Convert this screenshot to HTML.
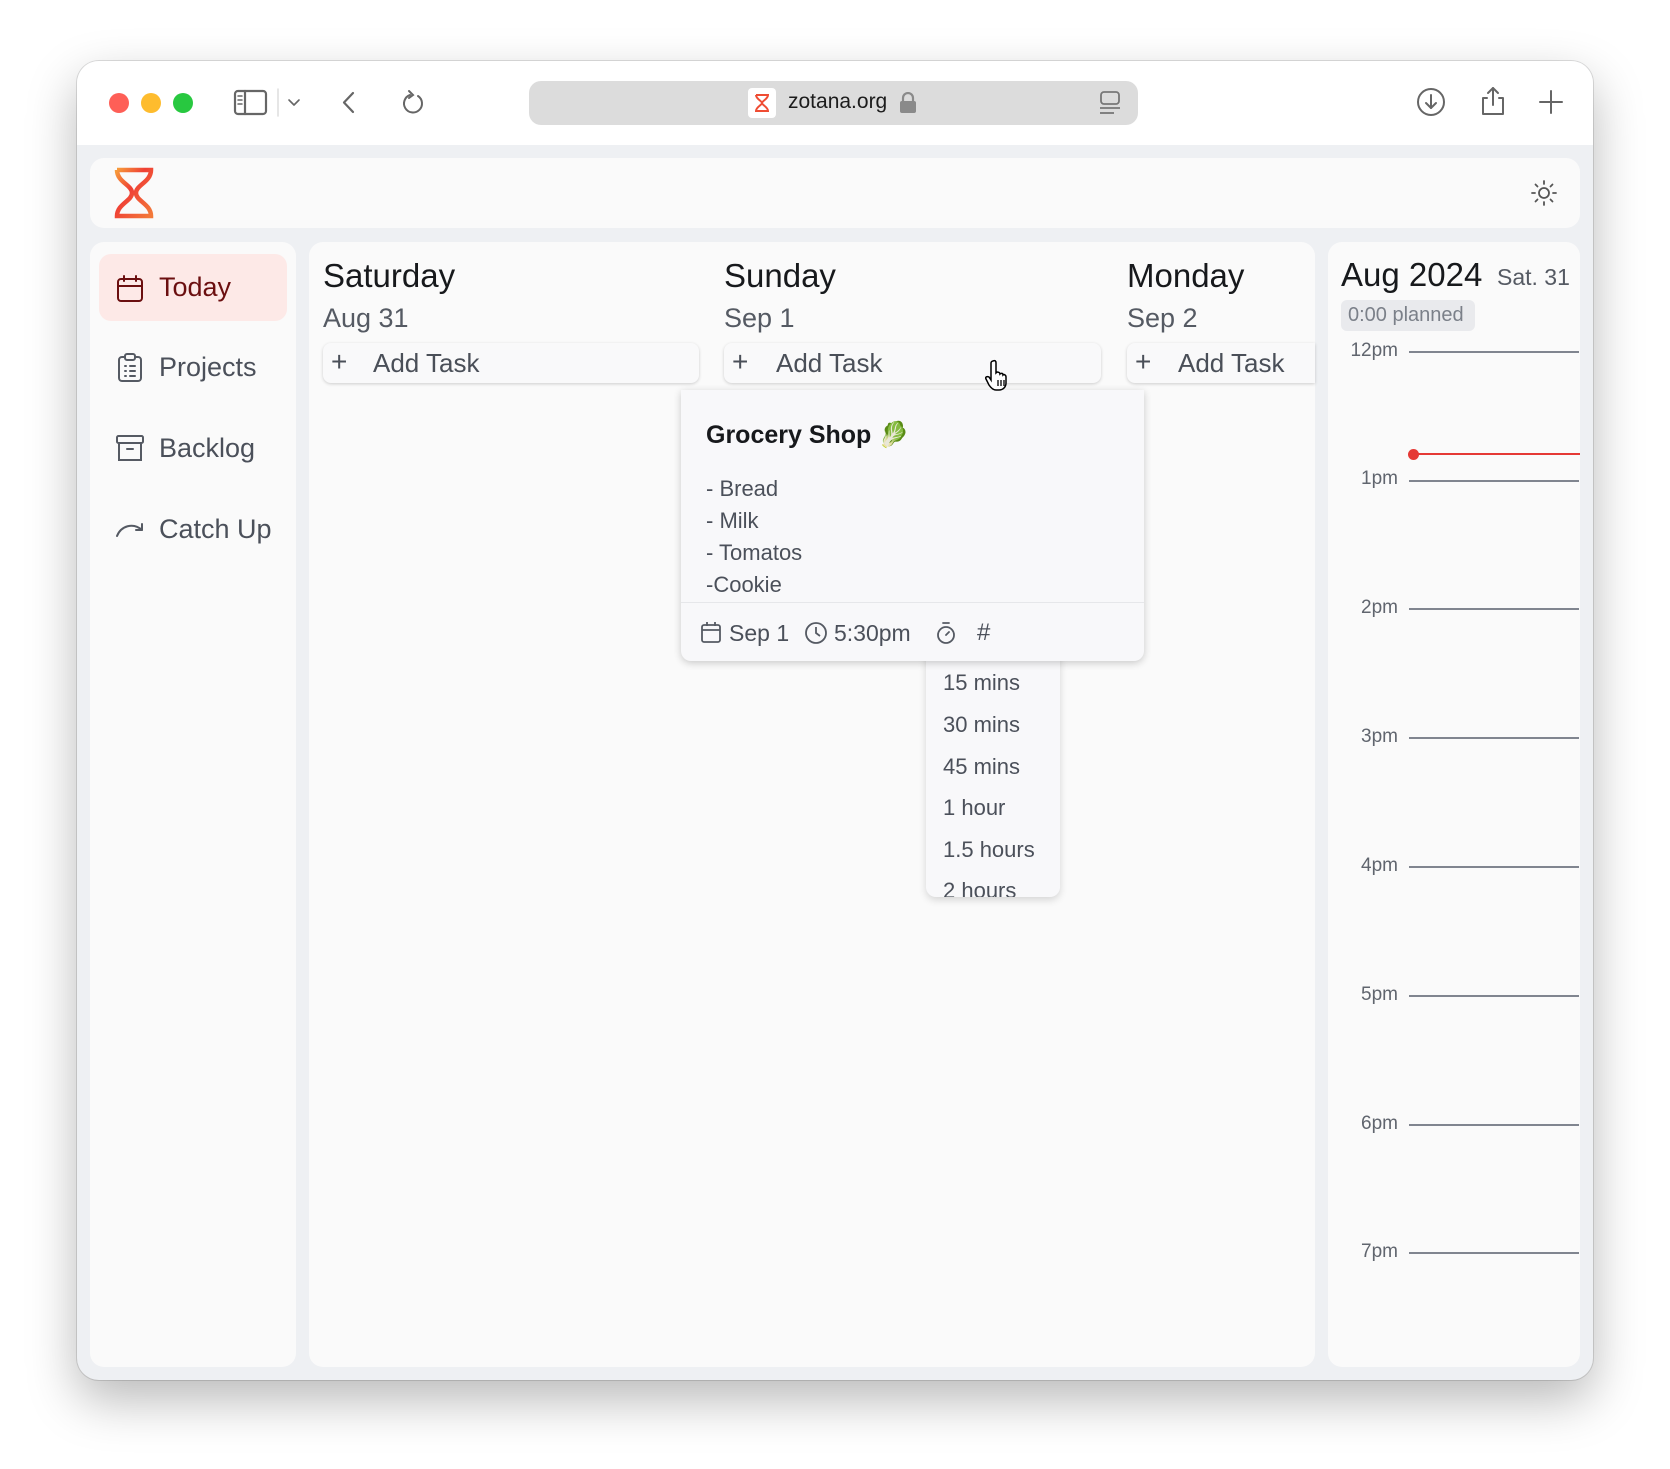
<!DOCTYPE html>
<html><head><meta charset="utf-8"><style>
*{box-sizing:border-box;margin:0;padding:0}
body{width:1670px;height:1469px;background:#fff;font-family:"Liberation Sans",sans-serif;position:relative;overflow:hidden}
.abs{position:absolute}
.win{left:77px;top:61px;width:1516px;height:1319px;border-radius:22px;background:#eef0f3;box-shadow:0 20px 50px rgba(0,0,0,.28),0 0 0 1px rgba(0,0,0,.12);overflow:hidden}
.tb{left:0;top:0;width:1516px;height:84px;background:#fff}
.card{background:#fafafa;border-radius:14px}
.t{position:absolute;white-space:nowrap}
.btn{position:absolute;height:40px;background:#f9f9fa;border-radius:8px;box-shadow:0 1px 3px rgba(0,0,0,.18);font-size:26px;color:#4a4f58}
.hr{position:absolute;left:1409px;width:170px;height:1.5px;background:#80858f}
.hl{position:absolute;width:70px;text-align:right;left:1328px;font-size:19px;color:#60656e}
.li{font-size:22px;color:#4b505a;position:absolute;left:706px}
.dd{font-size:22px;color:#4b505a;position:absolute;left:943px}
</style></head><body>
<div class="abs win">
 <div class="abs tb"></div>
</div>
<!-- traffic lights -->
<div class="abs" style="left:109px;top:93px;width:20px;height:20px;border-radius:50%;background:#fe5f57"></div>
<div class="abs" style="left:141px;top:93px;width:20px;height:20px;border-radius:50%;background:#febc2e"></div>
<div class="abs" style="left:173px;top:93px;width:20px;height:20px;border-radius:50%;background:#28c840"></div>
<svg class="abs" style="left:230px;top:88px" width="150" height="30" viewBox="0 0 150 30" fill="none" stroke="#666" stroke-width="2.2" stroke-linecap="round" stroke-linejoin="round">
<rect x="5" y="3" width="31" height="23" rx="3"/><line x1="15" y1="3" x2="15" y2="26"/><line x1="8" y1="8" x2="12" y2="8" stroke-width="1.5"/><line x1="8" y1="12" x2="12" y2="12" stroke-width="1.5"/><line x1="8" y1="16" x2="12" y2="16" stroke-width="1.5"/>
<line x1="48" y1="1" x2="48" y2="28" stroke="#ddd" stroke-width="1.5"/>
<polyline points="59,12 64,17 69,12" stroke-width="1.6"/>
<polyline points="123,5 114,14.5 123,24"/>
</svg>
<svg class="abs" style="left:398px;top:88px" width="30" height="30" viewBox="0 0 30 30" fill="none" stroke="#666" stroke-width="2" stroke-linecap="round"><path d="M20 8 A9 9 0 1 1 12 7"/><polyline points="11,3 15,7 11,10"/></svg>
<!-- address bar -->
<div class="abs" style="left:529px;top:81px;width:609px;height:44px;background:#dcdcdc;border-radius:12px"></div>
<div class="abs" style="left:748px;top:88px;width:28px;height:30px;background:#fff;border-radius:4px"></div>
<svg class="abs" style="left:754px;top:93px" width="16" height="20" viewBox="0 0 16 20" fill="none" stroke="#ef4c33" stroke-width="2"><path d="M2 2h12c0 4-6 6-6 8s6 4 6 8H2c0-4 6-6 6-8S2 6 2 2"/></svg>
<div class="t" style="left:788px;top:90px;font-size:21px;color:#1c1c1c">zotana.org</div>
<svg class="abs" style="left:899px;top:92px" width="18" height="22" viewBox="0 0 18 22"><path d="M4 9V6a5 5 0 0 1 10 0v3" fill="none" stroke="#8a8a8a" stroke-width="2.2"/><rect x="1" y="9" width="16" height="12" rx="2" fill="#8a8a8a"/></svg>
<svg class="abs" style="left:1098px;top:90px" width="24" height="26" viewBox="0 0 24 26" fill="none" stroke="#777" stroke-width="1.8"><rect x="3" y="2" width="18" height="12" rx="3"/><line x1="2" y1="18" x2="22" y2="18"/><line x1="2" y1="23" x2="16" y2="23"/></svg>
<svg class="abs" style="left:1414px;top:85px" width="160" height="34" viewBox="0 0 160 34" fill="none" stroke="#666" stroke-width="2" stroke-linecap="round" stroke-linejoin="round">
<circle cx="17" cy="17" r="13"/><line x1="17" y1="10" x2="17" y2="23"/><polyline points="12,18 17,23 22,18"/>
<path d="M73 13h-4v16h20V13h-4"/><line x1="79" y1="3" x2="79" y2="20"/><polyline points="74,8 79,3 84,8"/>
<line x1="137" y1="6" x2="137" y2="28"/><line x1="126" y1="17" x2="148" y2="17"/>
</svg>
<!-- header card -->
<div class="abs card" style="left:90px;top:158px;width:1490px;height:70px"></div>
<svg class="abs" style="left:114px;top:167px" width="40" height="52" viewBox="0 0 40 52" fill="none" stroke-width="4.5"><defs><linearGradient id="g" x1="0" y1="0" x2="1" y2="1"><stop offset="0" stop-color="#f79a3a"/><stop offset=".4" stop-color="#ef4035"/><stop offset="1" stop-color="#f37a3a"/></linearGradient></defs><path d="M3 3h34c0 12-15 15-15 23s15 11 15 23H3c0-12 15-15 15-23S3 15 3 3" stroke="url(#g)"/></svg>
<svg class="abs" style="left:1530px;top:179px" width="28" height="28" viewBox="0 0 28 28" fill="none" stroke="#555" stroke-width="1.8" stroke-linecap="round"><circle cx="14" cy="14" r="5"/><path d="M14 2v3M14 23v3M2 14h3M23 14h3M5.5 5.5l2 2M20.5 20.5l2 2M5.5 22.5l2-2M20.5 7.5l2-2"/></svg>
<!-- sidebar -->
<div class="abs card" style="left:90px;top:242px;width:206px;height:1125px"></div>
<div class="abs" style="left:99px;top:254px;width:188px;height:67px;background:#fde9e7;border-radius:12px"></div>
<svg class="abs" style="left:116px;top:274px" width="28" height="30" viewBox="0 0 28 30" fill="none" stroke="#6b0f10" stroke-width="2" stroke-linecap="round"><rect x="2" y="5" width="24" height="22" rx="3"/><line x1="2" y1="12" x2="26" y2="12"/><line x1="8" y1="2" x2="8" y2="7"/><line x1="20" y1="2" x2="20" y2="7"/></svg>
<div class="t" style="left:159px;top:272px;font-size:27px;color:#6b0f10">Today</div>
<svg class="abs" style="left:117px;top:353px" width="26" height="30" viewBox="0 0 26 30" fill="none" stroke="#555a63" stroke-width="2" stroke-linecap="round"><rect x="2" y="4" width="22" height="24" rx="3"/><rect x="8" y="1" width="10" height="6" rx="2" fill="#fafafa"/><path d="M8 13h1M13 13h5M8 18h1M13 18h5M8 23h1M13 23h5"/></svg>
<div class="t" style="left:159px;top:352px;font-size:27px;color:#4b505a">Projects</div>
<svg class="abs" style="left:115px;top:434px" width="30" height="30" viewBox="0 0 30 30" fill="none" stroke="#555a63" stroke-width="2" stroke-linecap="round"><rect x="2" y="2" width="26" height="7" rx="1.5"/><path d="M4 9v17h22V9"/><line x1="12" y1="15" x2="18" y2="15"/></svg>
<div class="t" style="left:159px;top:433px;font-size:27px;color:#4b505a">Backlog</div>
<svg class="abs" style="left:115px;top:518px" width="30" height="22" viewBox="0 0 30 22" fill="none" stroke="#555a63" stroke-width="2" stroke-linecap="round" stroke-linejoin="round"><path d="M2 18C6 8 18 4 27 12"/><polyline points="21,12 27,12 27,6"/></svg>
<div class="t" style="left:159px;top:514px;font-size:27px;color:#4b505a">Catch Up</div>
<!-- main -->
<div class="abs card" style="left:309px;top:242px;width:1006px;height:1125px;overflow:hidden">
</div>
<div class="t" style="left:323px;top:257px;font-size:33px;color:#17191c">Saturday</div>
<div class="t" style="left:323px;top:303px;font-size:27px;color:#555a63">Aug 31</div>
<div class="t" style="left:724px;top:257px;font-size:33px;color:#17191c">Sunday</div>
<div class="t" style="left:724px;top:303px;font-size:27px;color:#555a63">Sep 1</div>
<div class="t" style="left:1127px;top:257px;font-size:33px;color:#17191c">Monday</div>
<div class="t" style="left:1127px;top:303px;font-size:27px;color:#555a63">Sep 2</div>
<div class="btn" style="left:323px;top:343px;width:376px"><span class="t" style="left:8px;top:3px;font-size:28px">+</span><span class="t" style="left:50px;top:5px">Add Task</span></div>
<div class="btn" style="left:724px;top:343px;width:377px"><span class="t" style="left:8px;top:3px;font-size:28px">+</span><span class="t" style="left:52px;top:5px">Add Task</span></div>
<div class="btn" style="left:1127px;top:343px;width:188px;border-radius:8px 0 0 8px"><span class="t" style="left:8px;top:3px;font-size:28px">+</span><span class="t" style="left:51px;top:5px">Add Task</span></div>
<!-- dropdown -->
<div class="abs" style="left:926px;top:640px;width:134px;height:257px;background:#f8f8fa;border-radius:0 0 10px 10px;box-shadow:0 3px 8px rgba(0,0,0,.15);overflow:hidden">
<div class="dd" style="left:17px;top:30px">15 mins</div>
<div class="dd" style="left:17px;top:72px">30 mins</div>
<div class="dd" style="left:17px;top:114px">45 mins</div>
<div class="dd" style="left:17px;top:155px">1 hour</div>
<div class="dd" style="left:17px;top:197px">1.5 hours</div>
<div class="dd" style="left:17px;top:238px">2 hours</div>
</div>
<!-- popup -->
<div class="abs" style="left:681px;top:390px;width:463px;height:271px;background:#f8f8fa;border-radius:0 0 10px 10px;box-shadow:0 2px 8px rgba(0,0,0,.2)"></div>
<div class="t" style="left:706px;top:421px;font-size:25px;font-weight:bold;color:#17191c">Grocery Shop <span style="color:#3a9a2c">🥬</span></div>
<div class="li" style="top:476px">- Bread</div>
<div class="li" style="top:508px">- Milk</div>
<div class="li" style="top:540px">- Tomatos</div>
<div class="li" style="top:572px">-Cookie</div>
<div class="abs" style="left:681px;top:602px;width:463px;height:1px;background:#e6e7ea"></div>
<svg class="abs" style="left:700px;top:621px" width="22" height="24" viewBox="0 0 22 24" fill="none" stroke="#555a63" stroke-width="1.8"><rect x="2" y="4" width="18" height="17" rx="2"/><line x1="2" y1="9" x2="20" y2="9"/><line x1="7" y1="1" x2="7" y2="5"/><line x1="15" y1="1" x2="15" y2="5"/></svg>
<div class="t" style="left:729px;top:620px;font-size:23px;color:#4b505a">Sep 1</div>
<svg class="abs" style="left:804px;top:621px" width="24" height="24" viewBox="0 0 24 24" fill="none" stroke="#555a63" stroke-width="1.8"><circle cx="12" cy="12" r="10"/><polyline points="12,6 12,12 16,15"/></svg>
<div class="t" style="left:834px;top:620px;font-size:23px;color:#4b505a">5:30pm</div>
<svg class="abs" style="left:935px;top:621px" width="22" height="24" viewBox="0 0 22 24" fill="none" stroke="#555a63" stroke-width="1.8" stroke-linecap="round"><circle cx="11" cy="14" r="8"/><line x1="8" y1="2" x2="14" y2="2"/><line x1="11" y1="14" x2="14" y2="11"/></svg>
<div class="t" style="left:977px;top:619px;font-size:24px;color:#4b505a">#</div>
<!-- cursor -->
<svg class="abs" style="left:985px;top:358px" width="28" height="34" viewBox="0 0 28 34"><path d="M8 3c2-1 3 0 3 2v10l1-1c2 0 3 1 3 2 1-1 3-1 3 1 1-1 3 0 3 2v6c0 4-3 7-7 7h-3c-3 0-5-2-7-5l-3-6c-1-2 1-3 3-2l2 3V5c0-1 1-2 2-2z" fill="#fff" stroke="#000" stroke-width="1.5"/><path d="M13 22v6M16 22v6M19 22v6" stroke="#000" stroke-width="1.3"/></svg>
<!-- right panel -->
<div class="abs card" style="left:1328px;top:242px;width:252px;height:1125px"></div>
<div class="t" style="left:1341px;top:256px;font-size:33px;color:#17191c">Aug 2024</div>
<div class="t" style="left:1497px;top:264px;font-size:23px;color:#555a63">Sat. 31</div>
<div class="abs" style="left:1341px;top:300px;width:134px;height:31px;background:#e9eaed;border-radius:6px"></div>
<div class="t" style="left:1348px;top:304px;font-size:20px;color:#7b8089">0:00 planned</div>
<div class="hl" style="top:340px">12pm</div><div class="hr" style="top:351px"></div>
<div class="abs" style="left:1409px;top:453px;width:171px;height:2px;background:#e53935"></div>
<div class="abs" style="left:1408px;top:449px;width:11px;height:11px;border-radius:50%;background:#e53935"></div>
<div class="hl" style="top:468px">1pm</div><div class="hr" style="top:480px"></div>
<div class="hl" style="top:597px">2pm</div><div class="hr" style="top:608px"></div>
<div class="hl" style="top:726px">3pm</div><div class="hr" style="top:737px"></div>
<div class="hl" style="top:855px">4pm</div><div class="hr" style="top:866px"></div>
<div class="hl" style="top:984px">5pm</div><div class="hr" style="top:995px"></div>
<div class="hl" style="top:1113px">6pm</div><div class="hr" style="top:1124px"></div>
<div class="hl" style="top:1241px">7pm</div><div class="hr" style="top:1252px"></div>
</body></html>
